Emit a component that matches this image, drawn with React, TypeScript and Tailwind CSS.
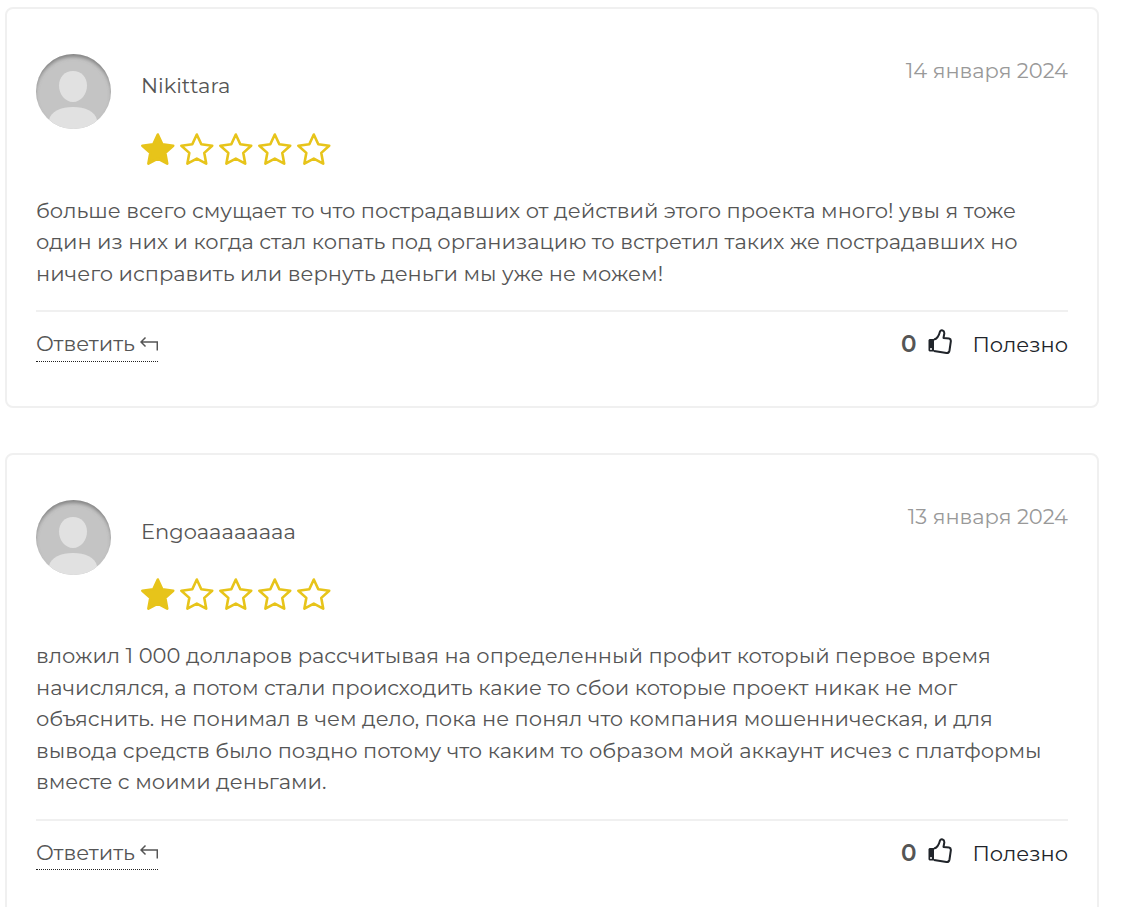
type Review = {
  id: number;
  author: string;
  date: string;
  rating: number;
  text: string;
  likes: number;
};

const reviews: Review[] = [
  {
    id: 1,
    author: "Nikittara",
    date: "14 января 2024",
    rating: 1,
    text: "больше всего смущает то что пострадавших от действий этого проекта много! увы я тоже один из них и когда стал копать под организацию то встретил таких же пострадавших но ничего исправить или вернуть деньги мы уже не можем!",
    likes: 0,
  },
  {
    id: 2,
    author: "Engoaaaaaaaa",
    date: "13 января 2024",
    rating: 1,
    text: "вложил 1 000 долларов рассчитывая на определенный профит который первое время начислялся, а потом стали происходить какие то сбои которые проект никак не мог объяснить. не понимал в чем дело, пока не понял что компания мошенническая, и для вывода средств было поздно потому что каким то образом мой аккаунт исчез с платформы вместе с моими деньгами.",
    likes: 0,
  },
];

function Avatar({ id }: { id: number }) {
  return (
    <svg viewBox="0 0 75 75" className="size-[75px] shrink-0" role="img" aria-label="Аватар">
      <defs>
        <clipPath id={`avatar-clip-${id}`}>
          <circle cx="37.5" cy="37.5" r="37.5" />
        </clipPath>
        <filter id={`avatar-blur-${id}`} x="-20%" y="-20%" width="140%" height="140%">
          <feGaussianBlur stdDeviation="2" />
        </filter>
      </defs>
      <g clipPath={`url(#avatar-clip-${id})`}>
        <rect width="75" height="75" fill="#c4c4c4" />
        <circle
          cx="37.5"
          cy="41"
          r="41"
          fill="none"
          stroke="#6a6a6a"
          strokeWidth="4"
          filter={`url(#avatar-blur-${id})`}
        />
        <path d="M37 17c8 0 14 6 14 14.500S45 48 37 48s-14-8-14-16.500S29 17 37 17z" fill="#e1e1e1" />
        <path d="M13 75v-9c2-9 12-13 24-13s22 4 24 13v9z" fill="#e1e1e1" />
      </g>
    </svg>
  );
}

function Star({ filled }: { filled: boolean }) {
  return (
    <svg viewBox="0 0 34 34" className="h-[34px] w-[34px]" aria-hidden="true">
      <path
        d="M16.800 1.500l4.500 9.800 10.900 1.400-7.900 7.200 1.900 10.700-9.400-5-9.400 5 1.900-10.700-7.900-7.200 10.900-1.400z"
        fill={filled ? "#e7c41a" : "none"}
        stroke="#e7c41a"
        strokeWidth="2.600"
        strokeLinejoin="round"
      />
    </svg>
  );
}

function ReplyIcon() {
  return (
    <svg viewBox="0 0 18 16" className="h-4 w-[18px]" fill="none" stroke="currentColor" aria-hidden="true">
      <path d="M5.500 1.500L1 6l4.500 4.500M1 6h16.300v8.500" strokeWidth="1.500" />
    </svg>
  );
}

function LikeIcon() {
  return (
    <svg viewBox="0 0 24 26" className="h-[26px] w-6" aria-hidden="true">
      <path
        d="M6 10.500c3-.5 5-4 6-8 1-2 4.500-1.500 4.300 2L15.500 9l5.500.5c1.500.3 2 1.500 1.800 3l-1.300 9c-.4 2-1.500 2.700-3 2.500L6 22"
        fill="none"
        stroke="#20242a"
        strokeWidth="2"
        strokeLinejoin="round"
      />
      <path d="M1.500 10H6v12.500H1.500L.5 21.500V11z" fill="#20242a" />
      <circle cx="3" cy="20" r="1" fill="#fff" />
    </svg>
  );
}

function ReviewCard({ review }: { review: Review }) {
  return (
    <article className="rounded-lg border-2 border-[#f0f0f0] px-[29px] pt-[45px] pb-11">
      <header className="flex items-start">
        <Avatar id={review.id} />
        <div className="ml-[30px] flex-1 pt-4">
          <h3>{review.author}</h3>
          <div className="mt-[31px] flex gap-[5px]" role="img" aria-label={`Оценка ${review.rating} из 5`}>
            {[1, 2, 3, 4, 5].map((n) => (
              <Star key={n} filled={n <= review.rating} />
            ))}
          </div>
        </div>
        <time className="pt-px text-[#999]">{review.date}</time>
      </header>

      <p className="mt-7">{review.text}</p>

      <footer className="mt-[21px] flex items-start justify-between border-t-2 border-[#f0f0f0] pt-4">
        <button type="button" className="flex items-center gap-[5px] border-b border-dotted border-[#222] pb-px">
          Ответить
          <ReplyIcon />
        </button>
        <div className="flex items-center pt-px">
          <span className="text-[23px] leading-none font-semibold">{review.likes}</span>
          <button type="button" className="ml-3 flex items-start gap-5 text-[#20242a]">
            <LikeIcon />
            Полезно
          </button>
        </div>
      </footer>
    </article>
  );
}

export default function App() {
  return (
    <main className="flex flex-col gap-[45px] bg-white pt-[7px] pr-[39px] pl-[5px] font-[Montserrat,Inter,'Noto_Sans',sans-serif] text-[21px] leading-normal text-[#555]">
      {reviews.map((review) => (
        <ReviewCard key={review.id} review={review} />
      ))}
    </main>
  );
}
